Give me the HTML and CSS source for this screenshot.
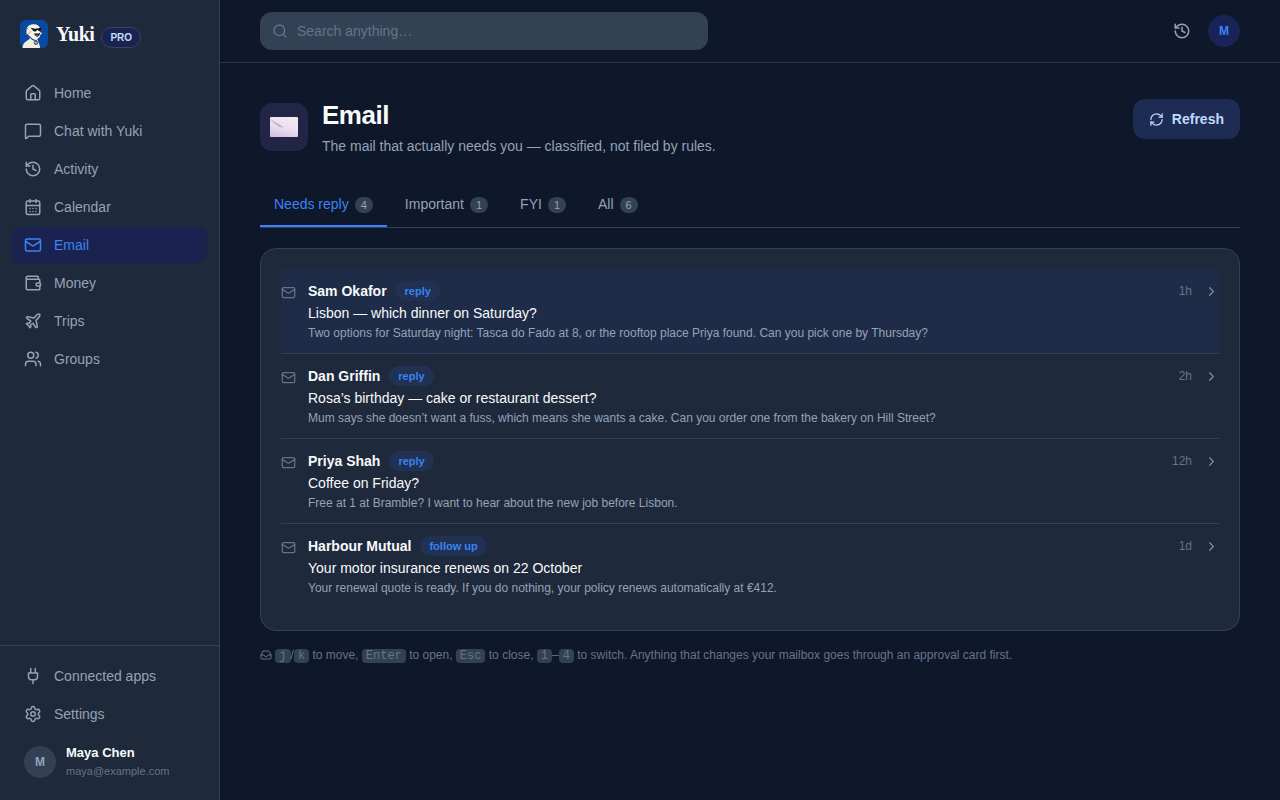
FILE: index.html
```html
<!DOCTYPE html>
<html lang="en">
<head>
<meta charset="utf-8">
<meta name="viewport" content="width=device-width, initial-scale=1">
<title>Email · Yuki</title>
<link rel="stylesheet" href="styles.css">
</head>
<body>
<svg class="sprite" aria-hidden="true">
  <symbol id="mail" viewBox="0 0 24 24"><rect x="2" y="4" width="20" height="16" rx="2"/><path d="m22 7-8.97 5.7a1.94 1.94 0 0 1-2.06 0L2 7"/></symbol>
  <symbol id="history" viewBox="0 0 24 24"><path d="M3 12a9 9 0 1 0 9-9 9.75 9.75 0 0 0-6.74 2.74L3 8"/><path d="M3 3v5h5"/><path d="M12 7v5l4 2"/></symbol>
  <symbol id="chevron" viewBox="0 0 24 24"><path d="m9 18 6-6-6-6"/></symbol>
</svg>
<div class="app">
  <aside class="sidebar">
    <a class="brand" href="#">
      <svg class="logo" viewBox="0 0 28 28" aria-hidden="true">
        <rect width="28" height="28" rx="6" fill="#084aa0"/>
        <path d="M2.500 28c0-2.800 1.200-5.200 3.500-6.500l3.500-2.500L10 15l7 3 1.500 4.500c1 1.700 1.600 3.500 1.500 5.500z" fill="#f4ecdf"/>
        <path d="M7 13.500C6 11.500 6.200 9 7.500 7 9 4.800 11.500 4 14 4.200c3 .2 5 1.500 6 3.800l2 3c.5 1.800-.2 3-1.500 3.500l-1 2.700c-1.300 1.500-3.300 1.900-5.500 1.500l-4-2z" fill="#fbf5e9"/>
        <path d="M8.500 7.500c-2.200 1.500-2.700 4.700-1.800 7.200 1.900.1 3.300-1.400 4-3.700" fill="#f7eddd" stroke="#4c5570" stroke-width=".5"/>
        <path d="m10.500 7.700 4.500 1 6.200-.9.300 2.400c-.5 1.400-2.300 1.500-3.200.2l-.7-.6-.7.400c-.7 1.800-3.400 1.800-4.200 0z" fill="#101827"/>
        <path d="M20.300 11c1.400-.4 2.300.2 1.800 1.200-.5.8-1.500.7-1.800-.1z" fill="#101827"/>
        <path d="M14 13.300c2.200.6 4.300.3 6-.6-.1 2.200-1 3.700-2.500 4-1.700 0-2.900-1.300-3.500-3.400z" fill="#19233b"/>
        <path d="M15.700 15.300c.8-.5 1.700-.5 2.500 0-.6 1-1.600 1.100-2.500 0z" fill="#c98278"/>
        <path d="M9.500 16.500c1.800 2.800 4.300 4 7.200 4" fill="none" stroke="#253a68" stroke-width="1.200"/>
        <circle cx="16" cy="22.800" r="1.800" fill="#91a6c8" stroke="#253a68" stroke-width=".8"/>
      </svg>
      <span class="brand-name">Yuki</span>
      <span class="plan">PRO</span>
    </a>
    <nav class="nav" aria-label="Main">
      <a href="#"><svg class="icon" viewBox="0 0 24 24"><path d="M15 21v-7a1 1 0 0 0-1-1h-4a1 1 0 0 0-1 1v7"/><path d="M3 10a2 2 0 0 1 .7-1.500l7-6a2 2 0 0 1 2.600 0l7 6A2 2 0 0 1 21 10v9a2 2 0 0 1-2 2H5a2 2 0 0 1-2-2z"/></svg>Home</a>
      <a href="#"><svg class="icon" viewBox="0 0 24 24"><path d="M22 17a2 2 0 0 1-2 2H6.800a2 2 0 0 0-1.400.6l-2.200 2.200A.7.7 0 0 1 2 21.300V5a2 2 0 0 1 2-2h16a2 2 0 0 1 2 2z"/></svg>Chat with Yuki</a>
      <a href="#"><svg class="icon"><use href="#history"/></svg>Activity</a>
      <a href="#"><svg class="icon" viewBox="0 0 24 24"><path d="M8 2v4M16 2v4M3 10h18"/><rect x="3" y="4" width="18" height="18" rx="2"/><path d="M8 14h.01M12 14h.01M16 14h.01M8 18h.01M12 18h.01M16 18h.01"/></svg>Calendar</a>
      <a href="#" class="active" aria-current="page"><svg class="icon"><use href="#mail"/></svg>Email</a>
      <a href="#"><svg class="icon" viewBox="0 0 24 24"><path d="M19 7V4a1 1 0 0 0-1-1H5a2 2 0 0 0 0 4h15a1 1 0 0 1 1 1v4h-3a2 2 0 0 0 0 4h3a1 1 0 0 0 1-1v-2a1 1 0 0 0-1-1"/><path d="M3 5v14a2 2 0 0 0 2 2h15a1 1 0 0 0 1-1v-4"/></svg>Money</a>
      <a href="#"><svg class="icon" viewBox="0 0 24 24"><path d="M17.800 19.200 16 11l3.500-3.500C21 6 21.500 4 21 3c-1-.5-3 0-4.500 1.500L13 8 4.800 6.200c-.5-.1-.9.1-1.100.5l-.3.5c-.2.5-.1 1 .3 1.300L9 12l-2 3H4l-1 1 3 2 2 3 1-1v-3l3-2 3.500 5.300c.3.4.8.5 1.300.3l.5-.2c.4-.3.6-.7.500-1.200z"/></svg>Trips</a>
      <a href="#"><svg class="icon" viewBox="0 0 24 24"><path d="M16 21v-2a4 4 0 0 0-4-4H6a4 4 0 0 0-4 4v2"/><circle cx="9" cy="7" r="4"/><path d="M22 21v-2a4 4 0 0 0-3-3.870M16 3.130a4 4 0 0 1 0 7.750"/></svg>Groups</a>
    </nav>
    <div class="side-foot">
      <nav class="nav" aria-label="Account">
        <a href="#"><svg class="icon" viewBox="0 0 24 24"><path d="M12 22v-5M9 8V2M15 8V2M18 8v5a4 4 0 0 1-4 4h-4a4 4 0 0 1-4-4V8z"/></svg>Connected apps</a>
        <a href="#"><svg class="icon" viewBox="0 0 24 24"><path d="M9.670 4.140a2.340 2.340 0 0 1 4.660 0 2.340 2.340 0 0 0 3.320 1.910 2.340 2.340 0 0 1 2.330 4.030 2.340 2.340 0 0 0 0 3.840 2.340 2.340 0 0 1-2.330 4.030 2.340 2.340 0 0 0-3.320 1.910 2.340 2.340 0 0 1-4.660 0 2.340 2.340 0 0 0-3.320-1.910 2.340 2.340 0 0 1-2.330-4.030 2.340 2.340 0 0 0 0-3.840 2.340 2.340 0 0 1 2.330-4.030 2.340 2.340 0 0 0 3.320-1.910"/><circle cx="12" cy="12" r="3"/></svg>Settings</a>
      </nav>
      <div class="user">
        <span class="avatar">M</span>
        <div class="user-text"><div class="user-name">Maya Chen</div><div class="user-mail">maya@example.com</div></div>
      </div>
    </div>
  </aside>

  <div class="page">
    <header class="topbar">
      <label class="search">
        <svg class="icon icon-sm" viewBox="0 0 24 24" aria-hidden="true"><circle cx="11" cy="11" r="8"/><path d="m21 21-4.300-4.300"/></svg>
        <input type="search" placeholder="Search anything…" aria-label="Search anything">
      </label>
      <div class="top-actions">
        <button class="icon-button" type="button" aria-label="History"><svg class="icon"><use href="#history"/></svg></button>
        <button class="avatar avatar-accent" type="button">M</button>
      </div>
    </header>

    <main class="content">
      <div class="heading">
        <div class="heading-icon">
          <svg viewBox="0 0 30 22" aria-hidden="true">
            <defs>
              <linearGradient id="paper" x1=".7" y1="0" x2=".3" y2="1"><stop offset="0" stop-color="#f3eaf0"/><stop offset=".55" stop-color="#e9deee"/><stop offset="1" stop-color="#d8c0e6"/></linearGradient>
              <linearGradient id="fold" x1="0" y1="0" x2="1" y2="1"><stop offset="0" stop-color="#c9bccb"/><stop offset="1" stop-color="#b9aac4"/></linearGradient>
            </defs>
            <rect x="1" y="1" width="28" height="20" rx="1" fill="url(#paper)"/>
            <path d="M2 3.500v1.200l8.500 6.300 4.500.8-5-3.600z" fill="url(#fold)"/>
          </svg>
        </div>
        <div class="heading-text">
          <h1>Email</h1>
          <p>The mail that actually needs you — classified, not filed by rules.</p>
        </div>
        <button class="refresh" type="button">
          <svg class="icon icon-xs" viewBox="0 0 24 24" aria-hidden="true"><path d="M3 12a9 9 0 0 1 9-9 9.750 9.750 0 0 1 6.740 2.740L21 8"/><path d="M21 3v5h-5M21 12a9 9 0 0 1-9 9 9.750 9.750 0 0 1-6.740-2.740L3 16"/><path d="M8 16H3v5"/></svg>
          Refresh
        </button>
      </div>

      <div class="tabs" role="tablist">
        <button class="tab selected" role="tab" aria-selected="true" type="button">Needs reply<span class="count">4</span></button>
        <button class="tab" role="tab" aria-selected="false" type="button">Important<span class="count">1</span></button>
        <button class="tab" role="tab" aria-selected="false" type="button">FYI<span class="count">1</span></button>
        <button class="tab" role="tab" aria-selected="false" type="button">All<span class="count">6</span></button>
      </div>

      <section class="card">
        <a class="message current" href="#">
          <svg class="icon icon-xs message-icon"><use href="#mail"/></svg>
          <div class="message-body">
            <div class="from">Sam Okafor<span class="tag">reply</span></div>
            <div class="subject">Lisbon — which dinner on Saturday?</div>
            <div class="snippet">Two options for Saturday night: Tasca do Fado at 8, or the rooftop place Priya found. Can you pick one by Thursday?</div>
          </div>
          <div class="meta">1h<svg class="icon icon-xs"><use href="#chevron"/></svg></div>
        </a>
        <a class="message" href="#">
          <svg class="icon icon-xs message-icon"><use href="#mail"/></svg>
          <div class="message-body">
            <div class="from">Dan Griffin<span class="tag">reply</span></div>
            <div class="subject">Rosa’s birthday — cake or restaurant dessert?</div>
            <div class="snippet">Mum says she doesn’t want a fuss, which means she wants a cake. Can you order one from the bakery on Hill Street?</div>
          </div>
          <div class="meta">2h<svg class="icon icon-xs"><use href="#chevron"/></svg></div>
        </a>
        <a class="message" href="#">
          <svg class="icon icon-xs message-icon"><use href="#mail"/></svg>
          <div class="message-body">
            <div class="from">Priya Shah<span class="tag">reply</span></div>
            <div class="subject">Coffee on Friday?</div>
            <div class="snippet">Free at 1 at Bramble? I want to hear about the new job before Lisbon.</div>
          </div>
          <div class="meta">12h<svg class="icon icon-xs"><use href="#chevron"/></svg></div>
        </a>
        <a class="message" href="#">
          <svg class="icon icon-xs message-icon"><use href="#mail"/></svg>
          <div class="message-body">
            <div class="from">Harbour Mutual<span class="tag">follow up</span></div>
            <div class="subject">Your motor insurance renews on 22 October</div>
            <div class="snippet">Your renewal quote is ready. If you do nothing, your policy renews automatically at €412.</div>
          </div>
          <div class="meta">1d<svg class="icon icon-xs"><use href="#chevron"/></svg></div>
        </a>
      </section>

      <p class="hint"><svg class="icon hint-icon" viewBox="0 0 24 24" aria-hidden="true"><path d="M22 12h-6l-2 3h-4l-2-3H2"/><path d="M5.450 5.110 2 12v6a2 2 0 0 0 2 2h16a2 2 0 0 0 2-2v-6l-3.450-6.890A2 2 0 0 0 16.760 4H7.240a2 2 0 0 0-1.790 1.110z"/></svg> <kbd>j</kbd>/<kbd>k</kbd> to move, <kbd>Enter</kbd> to open, <kbd>Esc</kbd> to close, <kbd>1</kbd>–<kbd>4</kbd> to switch. Anything that changes your mailbox goes through an approval card first.</p>
    </main>
  </div>
</div>
</body>
</html>
```

FILE: styles.css
```css
:root {
  --bg: #0f172a;
  --surface: #1e293b;
  --raised: #334155;
  --line: #334155;
  --text: #f8fafc;
  --muted: #94a3b8;
  --faint: #64748b;
  --accent: #3b82f6;
  --accent-bg: #1a234f;
}

* { box-sizing: border-box; }

body {
  margin: 0;
  background: var(--bg);
  color: var(--text);
  font: 14px/20px "Liberation Sans", Arial, sans-serif;
}

a { color: inherit; text-decoration: none; }
button { border: 0; font: inherit; cursor: pointer; }
h1, p { margin: 0; }

.sprite { display: none; }

.icon {
  flex: none;
  width: 18px;
  height: 18px;
  fill: none;
  stroke: currentColor;
  stroke-width: 2;
  stroke-linecap: round;
  stroke-linejoin: round;
}
.icon-sm { width: 16px; height: 16px; }
.icon-xs { width: 15px; height: 15px; }

.app { display: flex; min-height: 100vh; }

/* Sidebar */
.sidebar {
  display: flex;
  flex: none;
  flex-direction: column;
  width: 220px;
  background: var(--surface);
  border-right: 1px solid var(--line);
}
.brand {
  display: flex;
  align-items: center;
  padding: 20px 20px 27px;
}
.logo { width: 28px; height: 28px; margin-right: 8px; }
.brand-name {
  margin-right: 7px;
  font: bold 20px/28px "Liberation Serif", "Times New Roman", serif;
  letter-spacing: -0.5px;
}
.plan {
  margin-top: 6px;
  padding: 0 8px;
  border: 1px solid #35436f;
  border-radius: 999px;
  background: var(--accent-bg);
  color: #bfdbfe;
  font-size: 10px;
  font-weight: bold;
  line-height: 19px;
}
.nav { display: flex; flex-direction: column; gap: 2px; padding: 0 12px; }
.nav a {
  display: flex;
  align-items: center;
  gap: 12px;
  padding: 8px 12px;
  border-radius: 8px;
  color: var(--muted);
}
.nav a.active { background: var(--accent-bg); color: var(--accent); }
.side-foot { margin-top: auto; padding: 12px 0 20px; border-top: 1px solid var(--line); }
.user { display: flex; align-items: center; gap: 10px; padding: 12px 24px 0; }
.avatar {
  display: flex;
  flex: none;
  align-items: center;
  justify-content: center;
  width: 32px;
  height: 32px;
  padding: 0;
  border-radius: 50%;
  background: var(--raised);
  color: var(--muted);
  font-size: 12px;
  font-weight: bold;
}
.avatar-accent { background: #1a2358; color: var(--accent); }
.user-name { font-size: 13px; font-weight: bold; line-height: 18px; }
.user-mail { color: var(--faint); font-size: 11px; line-height: 18px; }

/* Top bar */
.page { flex: 1; min-width: 0; }
.topbar {
  display: flex;
  align-items: center;
  justify-content: space-between;
  gap: 24px;
  padding: 12px 40px;
  border-bottom: 1px solid #273449;
}
.search {
  display: flex;
  flex: 1;
  align-items: center;
  gap: 9px;
  max-width: 448px;
  padding: 9px 12px;
  border-radius: 12px;
  background: var(--raised);
  color: var(--faint);
}
.search input {
  flex: 1;
  min-width: 0;
  padding: 0;
  border: 0;
  outline: 0;
  background: none;
  color: var(--text);
  font: inherit;
}
.search input::placeholder { color: var(--faint); opacity: 1; }
.top-actions { display: flex; align-items: center; gap: 9px; }
.icon-button { display: flex; padding: 8px; background: none; color: var(--muted); }

/* Page heading */
.content { padding: 36px 40px; }
.heading { display: flex; align-items: flex-start; gap: 14px; }
.heading-icon {
  display: flex;
  align-items: center;
  justify-content: center;
  width: 48px;
  height: 48px;
  margin-top: 4px;
  border-radius: 12px;
  background: #232546;
}
.heading-icon svg { width: 30px; height: 22px; }
.heading-text { flex: 1; min-width: 0; }
h1 { font-size: 26px; line-height: 32px; letter-spacing: -0.5px; }
.heading-text p { margin-top: 5px; color: var(--muted); }
.refresh {
  display: flex;
  align-items: center;
  gap: 8px;
  padding: 10px 16px;
  border-radius: 12px;
  background: #1e2b52;
  color: #bfdbfe;
  font-weight: bold;
}

/* Tabs */
.tabs {
  display: flex;
  gap: 4px;
  margin: 28px 0 20px;
  border-bottom: 1px solid var(--line);
}
.tab {
  display: flex;
  align-items: center;
  gap: 6px;
  padding: 10px 14px 11px;
  border-bottom: 2px solid transparent;
  background: none;
  color: var(--muted);
}
.tab.selected { border-color: var(--accent); color: var(--accent); }
.count {
  min-width: 18px;
  margin-top: 2px;
  padding: 0 6px;
  border-radius: 999px;
  background: var(--raised);
  color: var(--muted);
  font-size: 11px;
  line-height: 16px;
}

/* Messages */
.card {
  padding: 20px;
  border: 1px solid var(--line);
  border-radius: 16px;
  background: var(--surface);
}
.message {
  display: flex;
  align-items: flex-start;
  gap: 12px;
  padding: 12px 0 10px;
  border-bottom: 1px solid var(--line);
}
.message:last-child { padding-bottom: 11px; border-color: transparent; }
.message.current { background: #1f2c47; }
.message-icon { margin-top: 4px; color: var(--faint); }
.message-body { flex: 1; min-width: 0; }
.from { display: flex; align-items: center; gap: 9px; font-weight: bold; }
.tag {
  padding: 0 9px;
  border-radius: 999px;
  background: #203153;
  color: var(--accent);
  font-size: 11px;
}
.subject { margin-top: 2px; }
.snippet { color: var(--muted); font-size: 12px; }
.meta { display: flex; align-items: center; gap: 12px; color: var(--faint); font-size: 12px; }
.meta .icon { color: #7c8aa0; }

.hint { margin-top: 14px; color: var(--faint); font-size: 12px; }
.hint-icon { width: 12px; height: 12px; vertical-align: -2px; }
kbd {
  padding: 0 4px;
  border-radius: 4px;
  background: var(--raised);
  font: 12px/14px "Liberation Mono", monospace;
}
```
